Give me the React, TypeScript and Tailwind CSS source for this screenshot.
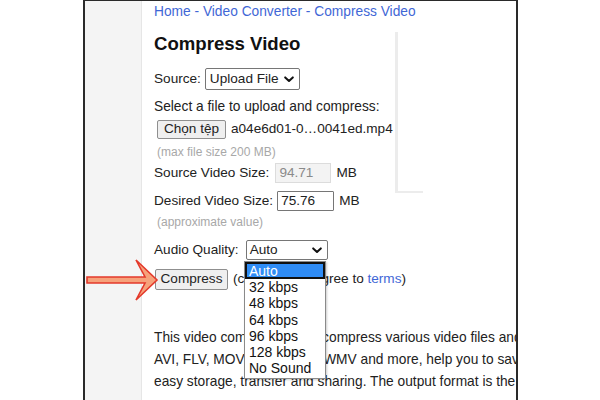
import React from "react";

function Chevron({ className = "" }: { className?: string }) {
  return (
    <svg width="10" height="7" viewBox="0 0 10 7" className={className}>
      <path d="M1.2 1.4 L5 5 L8.8 1.4" fill="none" stroke="#111" strokeWidth="2" strokeLinecap="round" strokeLinejoin="round" />
    </svg>
  );
}

export default function App() {
  const options = ["32 kbps", "48 kbps", "64 kbps", "96 kbps", "128 kbps", "No Sound"];
  return (
    <div
      className="relative w-[600px] h-[400px] bg-white overflow-hidden flex text-[#222]"
      style={{ fontFamily: '"Liberation Sans", Arial, sans-serif' }}
    >
      <div className="w-[83px] shrink-0" />
      <div className="w-[435px] h-[400px] shrink-0 border-l-2 border-r-2 border-t border-[#2a2a2a] flex overflow-hidden">
        <div className="w-[57px] shrink-0 bg-[#f4f4f4] border-r border-[#e6e6e6]" />
        <div className="relative flex-1 pl-[12px] flex flex-col overflow-hidden text-[13.6px]">
          {/* decorative box edge */}
          <div className="absolute left-[253px] top-[31px] w-[28px] h-[161px] border-l-[3px] border-b-2 border-[#ececec]" />

          <div className="relative h-[21px] leading-[21px] text-[#3f67d6] whitespace-nowrap text-[13.75px]">
            Home - Video Converter - Compress Video
          </div>
          <div className="relative mt-[10px] h-[24px] leading-[24px] font-bold text-[18.6px] text-[#111]">
            Compress Video
          </div>
          <div className="relative mt-[12px] h-[22px] flex items-center">
            <span>Source:</span>
            <div className="ml-[4px] w-[95px] h-[22px] border border-[#767676] rounded-[2px] bg-white flex items-center justify-between pl-[4px] pr-[5px]">
              <span>Upload File</span>
              <Chevron />
            </div>
          </div>
          <div className="relative mt-[8px] h-[18px] leading-[18px] whitespace-nowrap text-[13.75px]">
            Select a file to upload and compress:
          </div>
          <div className="relative mt-[4px] h-[19px] flex items-center whitespace-nowrap">
            <div className="ml-[3px] w-[69px] h-[19px] border border-[#8f8f8f] rounded-[2px] bg-[#efefef] flex items-center justify-center">
              Chọn tệp
            </div>
            <span className="ml-[5px]">a04e6d01-0…0041ed.mp4</span>
          </div>
          <div className="relative mt-[5px] h-[16px] leading-[16px] text-[12px] text-[#a8a8a8] pl-[3px]">
            (max file size 200 MB)
          </div>
          <div className="relative mt-[3px] h-[20px] flex items-center whitespace-nowrap">
            <span>Source Video Size:</span>
            <div className="ml-[6px] w-[56px] h-[20px] border border-[#dcdcdc] bg-[#f3f3f3] text-[#8a8a8a] flex items-center pl-[3px]">
              94.71
            </div>
            <span className="ml-[5px]">MB</span>
          </div>
          <div className="relative mt-[8px] h-[20px] flex items-center whitespace-nowrap">
            <span>Desired Video Size:</span>
            <div className="ml-[4px] w-[57px] h-[20px] border border-[#767676] rounded-[1px] bg-white flex items-center pl-[3px]">
              75.76
            </div>
            <span className="ml-[5px]">MB</span>
          </div>
          <div className="relative mt-[3px] h-[16px] leading-[16px] text-[12px] text-[#a8a8a8] pl-[3px]">
            (approximate value)
          </div>
          <div className="relative mt-[10px] h-[20px] flex items-center whitespace-nowrap">
            <span>Audio Quality:</span>
            <div className="ml-[7px] w-[82px] h-[20px] border border-[#767676] rounded-[2px] bg-white flex items-center justify-between pl-[3px] pr-[5px]">
              <span>Auto</span>
              <Chevron />
            </div>
          </div>
          <div className="relative mt-[9px] h-[21px] flex items-center whitespace-nowrap">
            <div className="ml-[1px] w-[73px] h-[21px] border border-[#8f8f8f] rounded-[2px] bg-[#efefef] flex items-center justify-center">
              Compress
            </div>
            <span className="ml-[5px]">
              (click here to agree to <span className="text-[#3f67d6]">terms</span>)
            </span>
          </div>
          <div className="relative mt-[37px] leading-[22px] whitespace-nowrap text-[13.75px]">
            <div>This video compressor can compress various video files and formats</div>
            <div>AVI, FLV, MOV, MP4, MKV, WMV and more, help you to save space for</div>
            <div>easy storage, transfer and sharing. The output format is the same</div>
          </div>

          {/* open dropdown list */}
          <div className="absolute left-[102px] top-[260px] w-[82px] h-[118px] bg-white border border-[#8a8a8a] shadow-[1px_1px_2px_rgba(0,0,0,0.2)] text-[14px]">
            <div className="h-[17px] leading-[14px] bg-[#2f8cf5] text-white border-2 border-[#111] pl-[2px]">Auto</div>
            {options.map((o) => (
              <div key={o} className="h-[16.3px] leading-[16.3px] pl-[4px] text-[#111]">
                {o}
              </div>
            ))}
          </div>
        </div>
      </div>

      {/* red arrow */}
      <svg className="absolute left-0 top-0" width="600" height="400" viewBox="0 0 600 400">
        <polygon
          points="87,277 145,277 136,260 157,280 136,300 145,283 87,283"
          fill="#f6a27b"
          stroke="#e4392b"
          strokeWidth="1.6"
          strokeLinejoin="miter"
        />
      </svg>
    </div>
  );
}
